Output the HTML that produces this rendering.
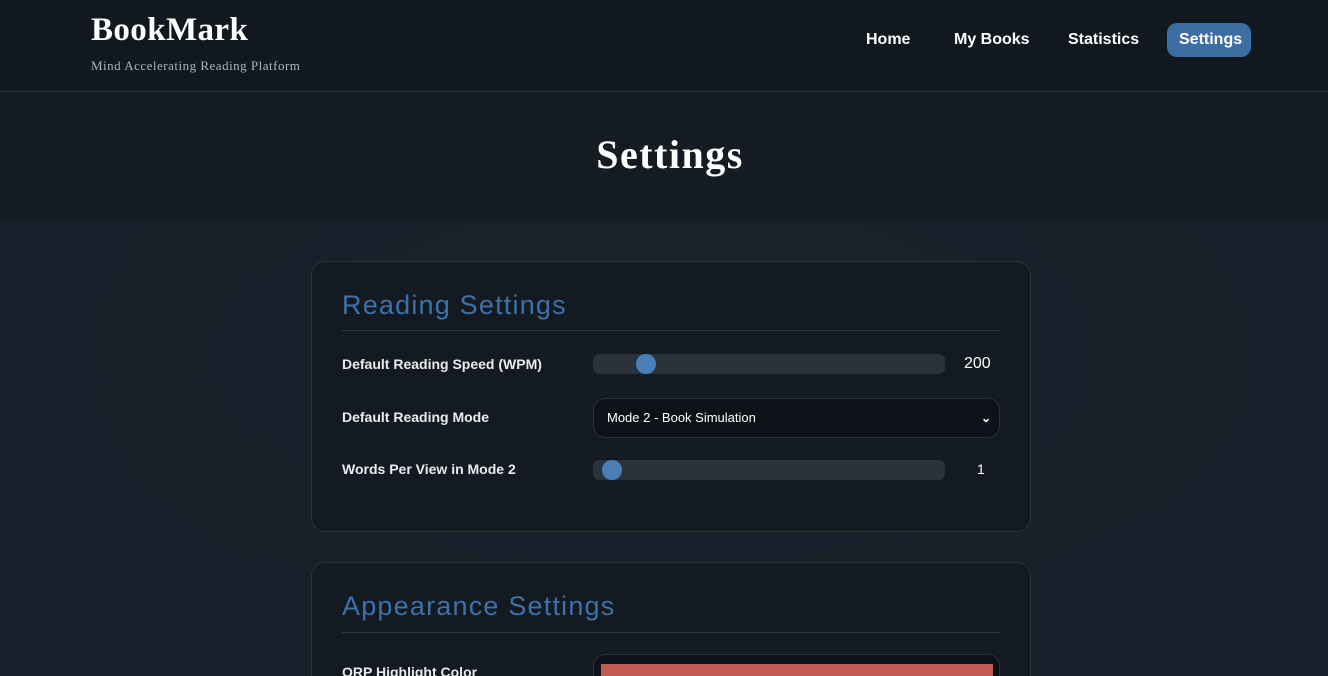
<!DOCTYPE html>
<html><head><meta charset="utf-8"><style>
*{box-sizing:border-box;margin:0;padding:0}
html,body{width:1328px;height:676px;overflow:hidden}
body{background:#19222b;font-family:"Liberation Sans",sans-serif;color:#fff;position:relative}
header{position:absolute;left:0;top:0;width:1328px;height:92px;background:#111820;border-bottom:1px solid #2a323b}
.logo{position:absolute;left:91px;top:12px;font-family:"Liberation Serif",serif;font-weight:bold;font-size:33px;letter-spacing:0.4px;color:#fff}
.tag{position:absolute;left:91px;top:58px;font-family:"Liberation Serif",serif;font-size:13px;letter-spacing:0.5px;color:#a9b6c4}
nav a{position:absolute;top:23px;height:34px;line-height:34px;font-weight:bold;font-size:16px;color:#fff;text-decoration:none;padding:0 12px;border-radius:10px}
.hero{position:absolute;left:0;top:93px;width:1328px;height:128px;background:#141b22;background-image:radial-gradient(#1f2830 1px,transparent 1.2px);background-size:12px 12px}
.hero h1{text-align:center;padding-left:12px;font-family:"Liberation Serif",serif;font-size:40px;line-height:124px;font-weight:bold;letter-spacing:1.5px}
.main{position:absolute;left:0;top:221px;width:1328px;height:455px;background:radial-gradient(ellipse at 50% 30%,#1a232c,#17202a 70%)}
.card{position:absolute;left:311px;width:720px;background:#131a21;border:1px solid #2a333d;border-radius:14px;overflow:hidden}
.card h2{position:absolute;left:30px;font-size:27px;font-weight:normal;color:#3e71a8;letter-spacing:1.2px}
.hr{position:absolute;left:30px;width:658px;height:1px;background:#2e3741}
.lbl{position:absolute;left:30px;font-size:14px;font-weight:bold;color:#e8ecef}
.track{position:absolute;left:281px;width:352px;height:20px;background:#2a323b;border-radius:6px}
.thumb{position:absolute;top:0;width:20px;height:20px;border-radius:50%;background:#4a7fb5}
.val{position:absolute;font-size:16px;color:#fff}
.sel{position:absolute;left:281px;top:136px;width:407px;height:40px;background:#0d1218;border:1px solid #2a323b;border-radius:12px;font-size:13px;line-height:38px;padding-left:13px}
</style></head><body>
<header>
<div class="logo">BookMark</div>
<div class="tag">Mind Accelerating Reading Platform</div>
<nav>
<a style="left:854px">Home</a>
<a style="left:942px">My Books</a>
<a style="left:1056px">Statistics</a>
<a style="left:1167px;background:#3d6ea3;width:84px">Settings</a>
</nav>
</header>
<div class="hero"><h1>Settings</h1></div>
<div class="main"></div>
<div class="card" style="top:261px;height:271px">
<h2 style="top:28px">Reading Settings</h2>
<div class="hr" style="top:68px"></div>
<div class="lbl" style="top:94px">Default Reading Speed (WPM)</div>
<div class="track" style="top:92px"><div class="thumb" style="left:43px"></div></div>
<div class="val" style="left:652px;top:93px">200</div>
<div class="lbl" style="top:147px">Default Reading Mode</div>
<div class="sel">Mode 2 - Book Simulation<span style="position:absolute;right:8px;top:0;font-size:12px;font-weight:bold">&#x2304;</span></div>
<div class="lbl" style="top:199px">Words Per View in Mode 2</div>
<div class="track" style="top:198px"><div class="thumb" style="left:9px"></div></div>
<div class="val" style="left:665px;top:199px;font-size:14px">1</div>
</div>
<div class="card" style="top:562px;height:130px">
<h2 style="top:28px">Appearance Settings</h2>
<div class="hr" style="top:69px"></div>
<div class="lbl" style="top:101px">ORP Highlight Color</div>
<div style="position:absolute;left:281px;top:91px;width:407px;height:40px;background:#0d1218;border:1px solid #2a323b;border-radius:12px"><div style="position:absolute;left:7px;top:9px;width:392px;height:30px;background:#c25a55"></div></div>
</div>
</body></html>
